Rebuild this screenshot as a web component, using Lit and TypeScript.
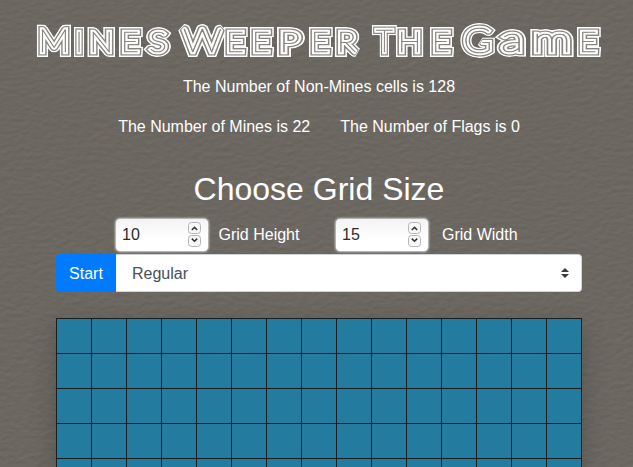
import { LitElement, html, svg, css } from "lit";
import { customElement, property } from "lit/decorators.js";

// [character, left edge, horizontal stretch, font size, baseline]
type Glyph = [string, number, number, number, number];
const TITLE: Glyph[] = [
  ["M", 37, 1.1, 32, 51.5], ["I", 74, 1, 27, 51.5], ["N", 87.5, 1.16, 27, 51.5], ["E", 119, 1.14, 27, 51.5], ["S", 145, 1.24, 27, 51.5],
  ["W", 177, 1.22, 32, 51.5], ["E", 224, 1.14, 27, 51.5], ["E", 250, 1.14, 27, 51.5], ["P", 277, 1.36, 27, 51.5], ["E", 309, 1.14, 27, 51.5], ["R", 335, 1.2, 27, 51.5],
  ["T", 372, 0.92, 32, 51.5], ["H", 396, 1.15, 27, 51.5], ["E", 430, 1.14, 27, 51.5],
  ["G", 460, 1.1, 36, 53], ["a", 497, 1.34, 36, 51.5], ["m", 530, 1.36, 36, 51.5], ["E", 577, 1.14, 27, 51.5],
];
// left side bearing as a share of the font size
const BEARING: Record<string, number> = {
  M: 0.12, I: 0.12, N: 0.12, E: 0.12, S: 0.06, W: 0.01, P: 0.12, R: 0.12, T: 0.02, H: 0.12, G: 0.06, a: 0.06, m: 0.09,
};
const STEM = 10;

@customElement("neon-title")
class NeonTitle extends LitElement {
  static styles = css`
    :host { display: block; height: 70px; }
    svg { display: block; width: 633px; height: 70px; }
    text { font-family: Lato, sans-serif; font-weight: 100; stroke-linejoin: miter; stroke-miterlimit: 1.6; }
    .face text { fill: #fff; stroke: #fff; stroke-width: 10px; }
    .w10 text { fill: #fff; stroke: #fff; stroke-width: 10px; }
    .w7 text { fill: #333; stroke: #333; stroke-width: 7.2px; }
    .w4 text { fill: #fff; stroke: #fff; stroke-width: 4.6px; }
    .w1 text { fill: #333; stroke: #333; stroke-width: 0.7px; }
  `;
  glyphs() {
    return TITLE.map(([c, left, stretch, size, y]) =>
      svg`<text transform="translate(${left} ${y}) scale(${stretch} 1)" x=${STEM / 2 - BEARING[c] * size} font-size=${size}>${c}</text>`);
  }
  render() {
    return html`<svg viewBox="0 0 633 70" role="img" aria-label="Mines Weeper The Game">
      <defs><mask id="stripes" maskUnits="userSpaceOnUse" x="0" y="0" width="633" height="70">
        ${["w10", "w7", "w4", "w1"].map((w) => svg`<g class=${w}>${this.glyphs()}</g>`)}
      </mask></defs>
      <g mask="url(#stripes)"><g class="face">${this.glyphs()}</g></g>
    </svg>`;
  }
}

@customElement("number-box")
class NumberBox extends LitElement {
  @property() value = "";
  static styles = css`
    :host { display: flex; box-sizing: border-box; width: 94px; height: 34px; padding: 0 7px 0 6px; align-items: center;
      justify-content: space-between; border: 1px solid #b5b4b2; border-radius: 5px; color: #2b2b2b;
      background: linear-gradient(#f3f3f3, #fff 60%); box-shadow: 0 0 2px #ddd; }
    svg { display: block; width: 13px; height: 26px; margin-top: -2px; }
  `;
  render() {
    return html`<span>${this.value}</span>
      <svg viewBox="0 0 13 26" fill="none">
        <rect x=".5" y="1.5" width="12" height="11" rx="3" fill="#f8f8f8" stroke="#b4b4b4"/>
        <rect x=".5" y="14.5" width="12" height="11" rx="3" fill="#f8f8f8" stroke="#b4b4b4"/>
        <path d="M3.8 9 6.5 6.4 9.2 9M3.8 17.6 6.5 20.2 9.2 17.6" stroke="#333" stroke-width="1.5"/>
      </svg>`;
  }
}

@customElement("app-root")
class AppRoot extends LitElement {
  static styles = css`
    :host { display: block; position: relative; width: 633px; height: 467px; overflow: hidden; background: #6b6761;
      color: #fff; font: 16px/24px "Liberation Sans", Arial, sans-serif; }
    .leather { position: absolute; inset: 0; width: 100%; height: 100%; }
    .page { position: relative; display: flex; flex-direction: column; }
    .main { width: 526px; margin-left: 56px; }
    .line { display: flex; justify-content: center; gap: 30px; height: 24px; margin-top: 5px; }
    .counts { margin-top: 16px; }
    h2 { margin: 31px 0 0; font-size: 32px; line-height: 38px; font-weight: 400; text-align: center; }
    .sizes { display: flex; align-items: center; height: 34px; margin: 10px 0 2px 59px; }
    .height { width: 81.5px; margin: 0 35px 0 9.5px; }
    .width { margin-left: 13px; }
    .level { display: flex; height: 38px; }
    .start { width: 60px; line-height: 40px; text-align: center; background: #007bff; border-radius: 4px 0 0 4px; }
    .select { display: flex; box-sizing: border-box; flex: 1; align-items: center; justify-content: space-between; padding: 0 12px 0 16px;
      background: #fff; border: 1px solid #ced4da; border-left: 0; border-radius: 0 4px 4px 0; color: #495057; line-height: 26px; }
    .select span { padding-top: 2px; }
    .select svg { width: 8px; height: 10px; }
    .grid { display: grid; grid-template-columns: repeat(15, 34px); grid-auto-rows: 34px; gap: 1px; width: 524px; margin-top: 26px;
      border: 1px solid #1b1e20; background: #1b1e20; box-shadow: 0 8px 24px rgba(0, 0, 0, 0.2); }
    .cell { background: #247ba0; }
  `;
  render() {
    return html`
      <svg class="leather" aria-hidden="true">
        <filter id="grain" x="0" y="0" width="100%" height="100%" color-interpolation-filters="sRGB">
          <feTurbulence type="fractalNoise" baseFrequency=".13 .24" numOctaves="3" seed="8"/>
          <feColorMatrix values="0 0 0 0 .5  0 0 0 0 .5  0 0 0 0 .5  1 0 0 0 0"/>
          <feDiffuseLighting surfaceScale=".15" lighting-color="#989289"><feDistantLight azimuth="250" elevation="45"/></feDiffuseLighting>
        </filter>
        <rect width="100%" height="100%" filter="url(#grain)"/>
      </svg>
      <div class="page">
        <neon-title></neon-title>
        <div class="main">
          <div class="line">The Number of Non-Mines cells is 128</div>
          <div class="line counts"><span>The Number of Mines is 22</span><span>The Number of Flags is 0</span></div>
          <h2>Choose Grid Size</h2>
          <div class="sizes">
            <number-box value="10"></number-box><span class="height">Grid Height</span>
            <number-box value="15"></number-box><span class="width">Grid Width</span>
          </div>
          <div class="level">
            <div class="start">Start</div>
            <div class="select"><span>Regular</span>
              <svg viewBox="0 0 8 10"><path fill="#343a40" d="M4 0 8 4H0zM0 6h8L4 10z"/></svg>
            </div>
          </div>
          <div class="grid">${Array.from({ length: 150 }, () => html`<div class="cell"></div>`)}</div>
        </div>
      </div>`;
  }
}
